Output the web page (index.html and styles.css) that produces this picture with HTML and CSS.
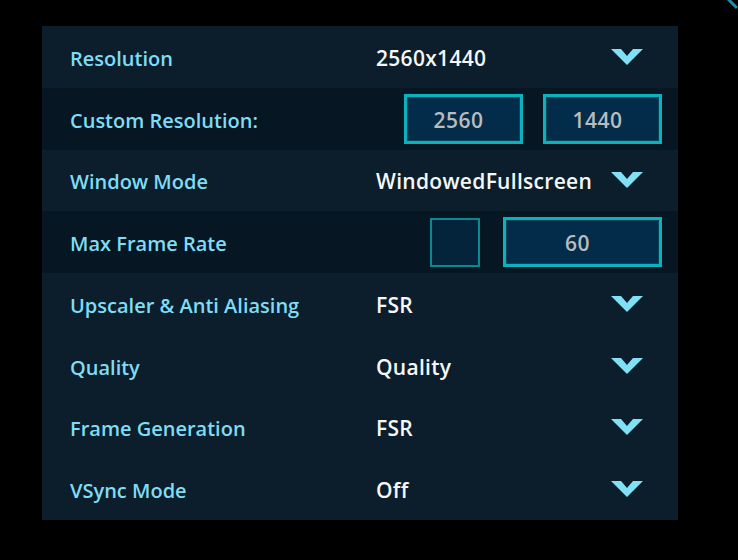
FILE: index.html
```html
<!DOCTYPE html>
<html>
<head>
<meta charset="utf-8">
<link rel="stylesheet" href="styles.css">
</head>
<body>
<svg class="corner" width="12" height="12" viewBox="0 0 12 12"><line x1="2" y1="-1" x2="11" y2="8" stroke="#1595a3" stroke-width="3"/></svg>
<div class="panel">
  <div class="row">
    <div class="label">Resolution</div>
    <div class="value">2560x1440</div>
    <svg class="chev" viewBox="0 0 32 16"><polygon points="0,0 10,0 16,7 22,0 32,0 16,16" /></svg>
  </div>
  <div class="row dark">
    <div class="label">Custom Resolution:</div>
    <div class="controls">
      <div class="field res">2560</div>
      <div class="field res">1440</div>
    </div>
  </div>
  <div class="row">
    <div class="label">Window Mode</div>
    <div class="value">WindowedFullscreen</div>
    <svg class="chev" viewBox="0 0 32 16"><polygon points="0,0 10,0 16,7 22,0 32,0 16,16" /></svg>
  </div>
  <div class="row dark">
    <div class="label">Max Frame Rate</div>
    <div class="controls fps">
      <div class="check"></div>
      <div class="field wide">60</div>
    </div>
  </div>
  <div class="row">
    <div class="label">Upscaler &amp; Anti Aliasing</div>
    <div class="value">FSR</div>
    <svg class="chev" viewBox="0 0 32 16"><polygon points="0,0 10,0 16,7 22,0 32,0 16,16" /></svg>
  </div>
  <div class="row">
    <div class="label">Quality</div>
    <div class="value">Quality</div>
    <svg class="chev" viewBox="0 0 32 16"><polygon points="0,0 10,0 16,7 22,0 32,0 16,16" /></svg>
  </div>
  <div class="row">
    <div class="label">Frame Generation</div>
    <div class="value">FSR</div>
    <svg class="chev" viewBox="0 0 32 16"><polygon points="0,0 10,0 16,7 22,0 32,0 16,16" /></svg>
  </div>
  <div class="row">
    <div class="label">VSync Mode</div>
    <div class="value">Off</div>
    <svg class="chev" viewBox="0 0 32 16"><polygon points="0,0 10,0 16,7 22,0 32,0 16,16" /></svg>
  </div>
</div>
</body>
</html>
```
FILE: styles.css
```css
html, body {
  margin: 0;
  padding: 0;
  background: #000;
  width: 738px;
  height: 560px;
  overflow: hidden;
}
body {
  position: relative;
  font-family: "Open Sans", "Noto Sans", sans-serif;
}
.corner {
  position: absolute;
  top: 0;
  right: 0;
}
.panel {
  margin: 26px 0 0 42px;
  width: 636px;
  height: 494px;
  background: #0c1e2b;
  display: grid;
  grid-template-rows: repeat(8, 1fr);
}
.row {
  display: flex;
  align-items: center;
  padding-left: 28px;
  padding-right: 35px;
}
.row.dark {
  background: #061622;
  padding-right: 16px;
}
.label {
  width: 306px;
  flex: none;
  color: #7fdcf4;
  font-size: 20px;
  font-weight: 600;
  padding-top: 3px;
}
.value {
  flex: 1;
  color: #f5f7f8;
  font-size: 21px;
  font-weight: 600;
  letter-spacing: 0.3px;
  padding-top: 2px;
}
.chev {
  width: 32px;
  height: 16px;
  fill: #7fe0f6;
  flex: none;
}
.controls {
  flex: 1;
  display: flex;
  justify-content: flex-end;
  align-items: center;
  gap: 20px;
}
.controls.fps {
  gap: 23px;
}
.field {
  box-sizing: border-box;
  height: 50px;
  border: 3px solid #08b3be;
  box-shadow: inset 0 0 0 1px #0d4456;
  background: #032c4a;
  color: #b9bcbf;
  font-size: 21px;
  font-weight: 600;
  letter-spacing: 0.5px;
  display: flex;
  align-items: center;
  justify-content: center;
  padding-top: 2px;
}
.field.res {
  width: 119px;
  padding-right: 10px;
}
.field.wide {
  width: 159px;
  padding-right: 10px;
}
.check {
  box-sizing: border-box;
  width: 50px;
  height: 49px;
  border: 2px solid #0a8990;
  background: #03243a;
}
```
